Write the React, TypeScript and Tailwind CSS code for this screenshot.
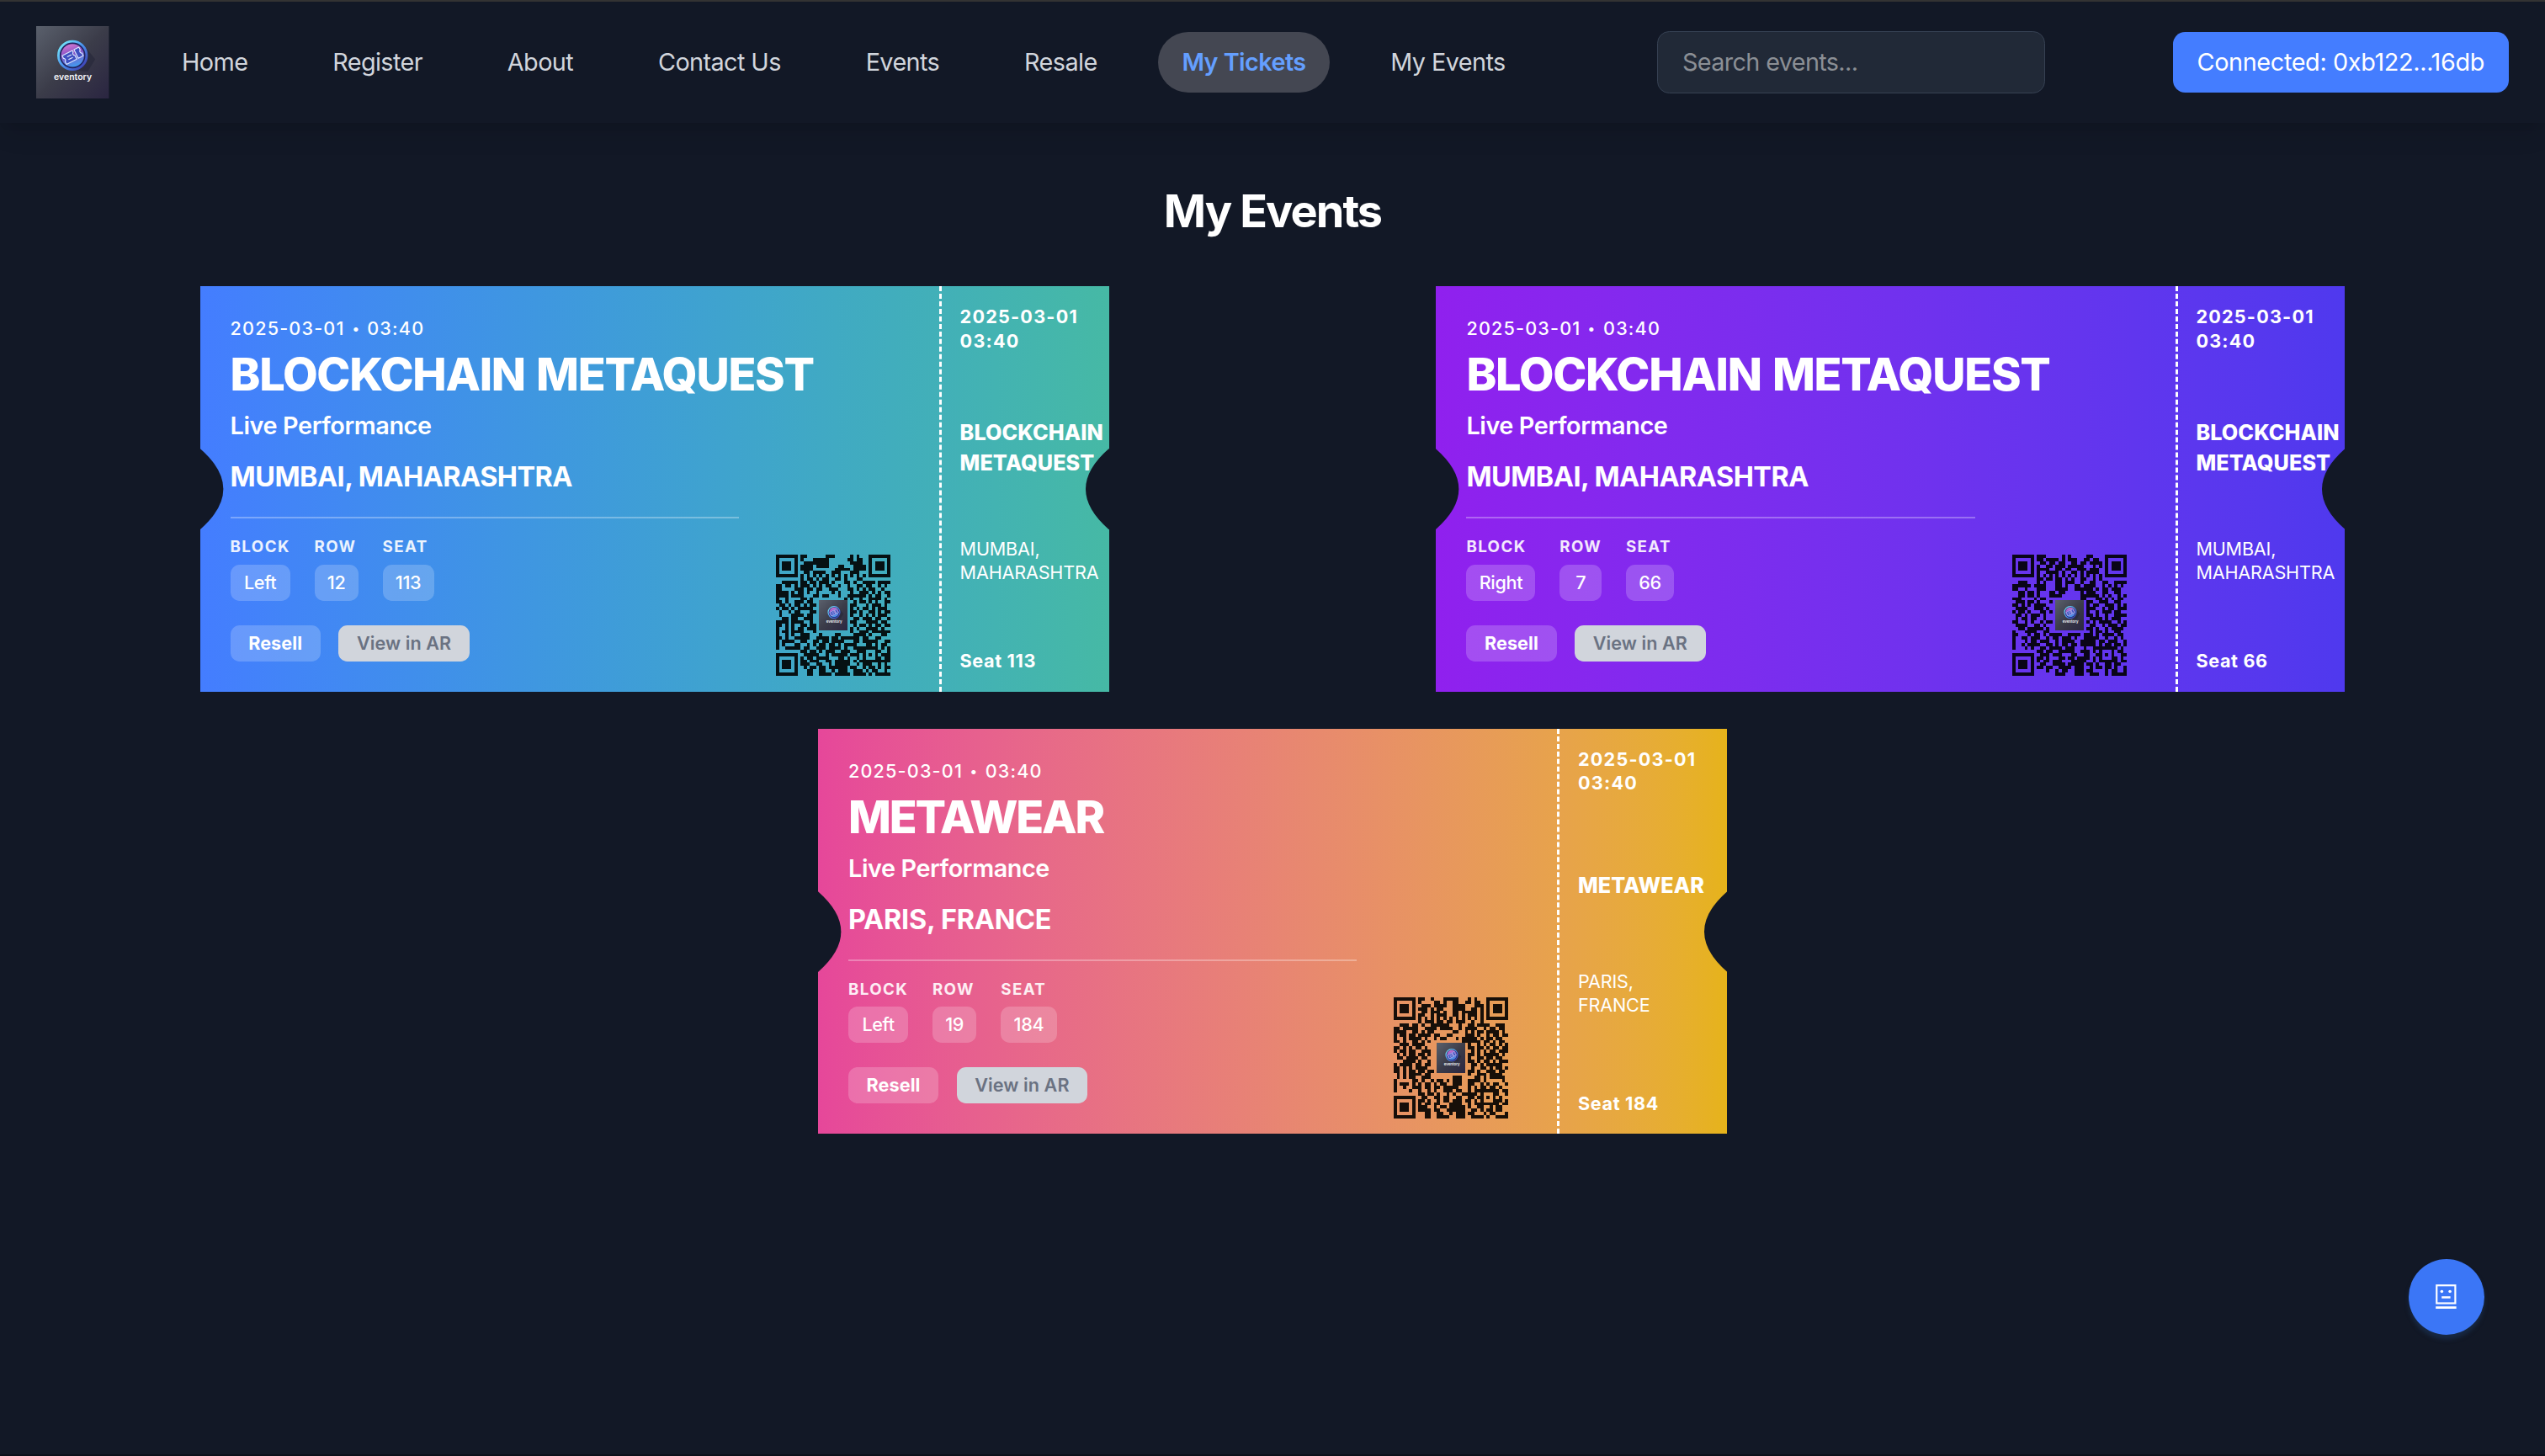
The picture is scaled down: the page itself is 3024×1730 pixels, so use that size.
import React from "react";

const QR_LEFT = [
  "#######.##......###.....#.#...#######",
  "#.....#.#...#####......##.##..#.....#",
  "#.###.#..########.......####..#.###.#",
  "#.###.#.####.####...##...####.#.###.#",
  "#.###.#.####.......#####.####.#.###.#",
  "#.....#..##.####..###...###...#.....#",
  "#######.#.#.#.#.#.#.#.#.#.#.#.#######",
  "........#.##.#.##..##.#...##.........",
  "..#####.##.##.###.#...##.#..####.####",
  "##.##.#.###.#.#.##..#..#..##.##..#.#.",
  "##....###.##.##..###...##.#.#.##..#..",
  "####.#.##.#..#....#.#...#..###.#.#.##",
  "####.####...##.##...#..######.#.##..#",
  "#..#....##.#..........#.#..#..####.#.",
  "##.#..###.##.............#.##.#.#..##",
  ".##.#.##.#.##...........##...#.###.#.",
  "#.##.#.#####............#.#.##.#.###.",
  ".#..#.##...##...........##.#..##.#.##",
  ".#...####.##............#..#.#.#.###.",
  "..##.##..###.............##.###.##..#",
  "####.####..#............##...####.##.",
  "##.#.#..##.##............#.##.#.##.##",
  "#..#.#.##.###...........#.#..####.#..",
  "#.##.####...#...........#..###.######",
  "#..#.#..###...#....##....####.#...##.",
  "##.#..#####..####.##.######.##..##...",
  "#.####..##..##.##.####...##.#####..##",
  "#.#...##..#.#.##.##.#.####...##.#.##.",
  "#..#####.##..###.####.#..########.#.#",
  "........##.##.#.###..###..###...##..#",
  "#######..#####..#.#####.###.#.#.#.###",
  "#.....#.#.##.####...##.#..#.#...##.##",
  "#.###.#.##.###..##.#####.#.##########",
  "#.###.#.###..##..#.#####..#.###..#.#.",
  "#.###.#..#.##.##.######.##..#.##.#.##",
  "#.....#...##..##..#.###..###.#.##..#.",
  "#######...##..####.#####.####.#.#####",
];

const QR_RIGHT = [
  "#######.###.....#.#.....##....#######",
  "#.....#.##.####.#.###..##.##..#.....#",
  "#.###.#..##.##.##..##.##.####.#.###.#",
  "#.###.#.#..##.###.#####...#.#.#.###.#",
  "#.###.#.####..##.##..###.###..#.###.#",
  "#.....#.#..####.#..##.#.####..#.....#",
  "#######.#.#.#.#.#.#.#.#.#.#.#.#######",
  "........##.##.##.#.#..##..#.#........",
  "..###...#.#...##.###..#..##..##..####",
  "######.####...##.#..##.####..#.#.#.#.",
  "##..#...###...####..######.#.##.###..",
  "..##.##.#...##.##.....#.###..##..##..",
  "..##.##.#...####......######.#.#..#.#",
  "###....#.##...........##...##.#.#.##.",
  ".###.##.#...#...........##..###..##..",
  "##.#.#.####.............#.##..###.#.#",
  ".####..###.#............###..#.##.###",
  "#.##.#...##.#...........#..#.###.##..",
  ".##.#.###.#.............##.#..#..####",
  ".#.##.##..#..............####.#.###..",
  "##..#.#..#.##...........#.#.####..#.#",
  ".####..##.#..............##..#.###.##",
  "..##.#####.#............##.#..#.####.",
  "#...####..##.............#.##.#..##..",
  "##...#.##.#.####..####.###.#.####.##.",
  "#..##.###..#.##.###.#..#####..#..#.#.",
  "#...#.##.###..#.####..#####.##.###..#",
  "#..#.####..##.#.##.##.#####.#.##.##.#",
  "#...#.#..##.####.###...#..########.#.",
  "........##.##..#####..###.#.#...#.##.",
  "#######..###.###...##..##..##.#.#..##",
  "#.....#.##.#...##.##.####.#.#...##.#.",
  "#.###.#.#.##.###...#####..#.######.##",
  "#.###.#..##..####.#####.##.#..##.##..",
  "#.###.#.##.##..####.###..#.##.##.#..#",
  "#.....#....#..#.##..###.##....#.##..#",
  "#######.......###...###..###..#.#####",
];

const QR_PINK = [
  "#######.##..#...#####...#.#...#######",
  "#.....#.#....##.#..##..##.##..#.....#",
  "#.###.#..###.####..####...###.#.###.#",
  "#.###.#.###.#.##...####..##.#.#.###.#",
  "#.###.#..##.###.#..##.#####.#.#.###.#",
  "#.....#.##..#.###..##.#.###.#.#.....#",
  "#######.#.#.#.#.#.#.#.#.#.#.#.#######",
  "........#.###.##.##.###..#..#........",
  "..###.##.#..######...#..##.####..###.",
  "##.#####..####.####..#.####..#.##.##.",
  "####..##.#.##......##..#.#.##.####.#.",
  "#.##.##.####.##..##....###.#..#.##.##",
  "#..#.####.#..#.##...#.#####.#.##.##..",
  "##.#..##.#.#..........######.##.#.##.",
  "..###.####..............#..#.#.##.#.#",
  "##.#.#.##.#.............##.##.#.##.##",
  "#.##.##..###.............#.#.#.##.###",
  ".#.#.##.##.#............##.#.#####.#.",
  ".##.####.##.............#..##.##.##..",
  "...####.#..#............##.#.##.#.###",
  "#.####.##.##.............##.#.#####..",
  "##.#.#.####..............#..##.#.##.#",
  "##.#.##.##.##...........##.#..###.##.",
  ".#.#.####.##............#..###.####..",
  ".#.#.##..###.......###....##.#.#####.",
  "#.....##.#..#.##.#.###..####.#.....#.",
  "#.###.#.#.##.#.##..###..##..#.#.##..#",
  "#..#..###.##.##.#####...#.#.##.##.#..",
  "#....#..#..#.#..###.##..#.########.##",
  "........##.##.#..#.#..#####.#...##..#",
  "#######..##..##.##..##..##.##.#.#.#..",
  "#.....#.##.#..#.##.###.##.#.#...###.#",
  "#.###.#.#.##.##...####..#.########.##",
  "#.###.#.###..#.##.#####.#..##..#.##..",
  "#.###.#.####.##..######..##.#.##.##..",
  "#.....#...##..##..#.###.##...#.##...#",
  "#######...##..####..###..####.#..####",
];

function Logo({ size, id }: { size: number; id: string }) {
  return (
    <svg width={size} height={size} viewBox="0 0 48 48" className="block shrink-0">
      <defs>
        <linearGradient id={`${id}-bg`} x1="0" y1="0" x2="1" y2="1">
          <stop offset="0" stopColor="#5a606c" />
          <stop offset=".5" stopColor="#3b3c49" />
          <stop offset="1" stopColor="#2a2541" />
        </linearGradient>
        <linearGradient id={`${id}-ring`} x1="0" y1="0" x2="1" y2="1">
          <stop offset="0" stopColor="#7df6fa" />
          <stop offset=".5" stopColor="#4a92ee" />
          <stop offset="1" stopColor="#3b2fa8" />
        </linearGradient>
        <linearGradient id={`${id}-disc`} x1="0.3" y1="0" x2=".6" y2="1">
          <stop offset="0" stopColor="#d77bd3" />
          <stop offset=".4" stopColor="#8a52c4" />
          <stop offset="1" stopColor="#3f9cf0" />
        </linearGradient>
      </defs>
      <rect width="48" height="48" fill={`url(#${id}-bg)`} />
      <path d="M31 12 L39 22 L34 30 L24 29 Z" fill="#252638" opacity=".6" />
      <circle cx="24" cy="19.4" r="9.3" fill="#20225e" />
      <circle cx="24" cy="19.4" r="9.3" fill="none" stroke={`url(#${id}-ring)`} strokeWidth="1.6" />
      <circle cx="24" cy="19.4" r="7.6" fill={`url(#${id}-disc)`} />
      <g transform="rotate(-27 24 19.4)" fill="#3f4fc0" stroke="#dce6ff" strokeWidth=".65" strokeLinejoin="round">
        <path d="M17.8 16.4h7.6v1.2a1.3 1.3 0 0 0 0 2.4v2.8h-7.6v-2a1.3 1.3 0 0 0 0-2.4z" />
        <path d="M26.6 16.4h3.6v2a1.3 1.3 0 0 0 0 2.4v2h-3.6z" />
        <path d="M20.4 18.6h3.2M20.4 20.6h3.2" fill="none" />
      </g>
      <text
        x="24.2"
        y="35.4"
        textAnchor="middle"
        fontFamily="Inter, sans-serif"
        fontWeight="600"
        fontSize="5.8"
        fill="#f3f5fa"
        textLength="25"
      >
        eventory
      </text>
    </svg>
  );
}

function QrCode({ rows, id }: { rows: string[]; id: string }) {
  const d = rows
    .map((row, y) =>
      Array.from(row.matchAll(/#+/g))
        .map((m) => `M${m.index} ${y}h${m[0].length}v1h-${m[0].length}z`)
        .join("")
    )
    .join("");
  return (
    <div className="relative h-20 w-[75.6px]">
      <svg viewBox="0 0 37 37" preserveAspectRatio="none" shapeRendering="crispEdges" className="block h-full w-full">
        <path d={d} fill="#000" fillOpacity=".9" />
      </svg>
      <div className="absolute left-[28.3px] top-[30px] h-5 w-[19px] overflow-hidden">
        <Logo size={20} id={id} />
      </div>
    </div>
  );
}

type Ticket = {
  id: string;
  name: string;
  nameTracking: string;
  city: string;
  cityTracking: string;
  cityTop: string;
  cityBottom: string;
  block: string;
  row: string;
  seat: string;
  gradient: string;
  qr: string[];
};

const tickets: Ticket[] = [
  {
    id: "t113",
    name: "BLOCKCHAIN METAQUEST",
    nameTracking: "tracking-[-0.024em] [word-spacing:0.05em]",
    city: "MUMBAI, MAHARASHTRA",
    cityTracking: "tracking-[-0.016em]",
    cityTop: "MUMBAI,",
    cityBottom: "MAHARASHTRA",
    block: "Left",
    row: "12",
    seat: "113",
    gradient: "from-[#447dff] to-[#46b9a5]",
    qr: QR_LEFT,
  },
  {
    id: "t66",
    name: "BLOCKCHAIN METAQUEST",
    nameTracking: "tracking-[-0.024em] [word-spacing:0.05em]",
    city: "MUMBAI, MAHARASHTRA",
    cityTracking: "tracking-[-0.016em]",
    cityTop: "MUMBAI,",
    cityBottom: "MAHARASHTRA",
    block: "Right",
    row: "7",
    seat: "66",
    gradient: "from-[#9020ee] to-[#4f39ee]",
    qr: QR_RIGHT,
  },
  {
    id: "t184",
    name: "METAWEAR",
    nameTracking: "tracking-[-0.04em]",
    city: "PARIS, FRANCE",
    cityTracking: "tracking-[-0.007em]",
    cityTop: "PARIS,",
    cityBottom: "FRANCE",
    block: "Left",
    row: "19",
    seat: "184",
    gradient: "from-[#e6479a] to-[#e6b31a]",
    qr: QR_PINK,
  },
];

function Detail({ label, value }: { label: string; value: string }) {
  return (
    <div className="flex flex-col">
      <span className="mb-[3px] text-[10.4px] leading-4 font-bold tracking-[0.075em] text-white/90">{label}</span>
      <span className="rounded-md bg-white/20 px-[8.5px] text-center text-xs leading-6 font-medium tracking-[-0.015em] text-white">
        {value}
      </span>
    </div>
  );
}

function Notch({ className }: { className: string }) {
  return (
    <svg
      viewBox="0 0 15.2 53.2"
      className={`absolute top-1/2 h-[53.2px] w-[15.2px] -translate-y-1/2 overflow-visible ${className}`}
    >
      <path d="M-3 0H0Q30.4 26.6 0 53.2H-3Z" fill="#121826" />
    </svg>
  );
}

function TicketCard({ t }: { t: Ticket }) {
  return (
    <article className={`relative flex h-[267.4px] w-[600px] overflow-hidden bg-linear-to-r text-white ${t.gradient}`}>
      <div className="flex flex-1 flex-col pt-5 pl-5">
        <p className="text-xs leading-4 font-medium tracking-[0.055em]">
          2025-03-01 <span className="inline-block scale-75">•</span> 03:40
        </p>
        <h2 className={`mt-[4.4px] text-[30px] leading-9 font-extrabold whitespace-nowrap ${t.nameTracking}`}>
          {t.name}
        </h2>
        <p className="mt-[3.6px] text-base leading-6 font-semibold tracking-[-0.014em]">Live Performance</p>
        <p className={`mt-2 text-lg leading-7 font-bold ${t.cityTracking}`}>{t.city}</p>
        <div className="mt-3 w-[335.8px] border-t-[1.2px] border-white/30" />
        <div className="mt-[11.4px] flex gap-4">
          <Detail label="BLOCK" value={t.block} />
          <Detail label="ROW" value={t.row} />
          <Detail label="SEAT" value={t.seat} />
        </div>
        <div className="mt-4 flex gap-3">
          <button className="rounded-md bg-white/20 px-3 text-xs leading-6 font-bold tracking-[0.004em]">Resell</button>
          <button className="rounded-md bg-[#d1d5dc] px-3 text-xs leading-6 font-semibold tracking-[0.004em] text-[#6a7282]">
            View in AR
          </button>
        </div>
      </div>
      <div className="absolute top-[177.2px] left-[380.2px]">
        <QrCode rows={t.qr} id={t.id} />
      </div>
      <div className="flex w-28 flex-col justify-between border-l-2 border-dashed border-white p-3">
        <p className="text-xs leading-4 font-bold tracking-[0.057em]">
          2025-03-01
          <br />
          03:40
        </p>
        <p className="mt-[3.6px] text-sm leading-5 font-extrabold tracking-[0.003em]">
          {t.name.split(" ").map((w) => (
            <span key={w} className="block">
              {w}
            </span>
          ))}
        </p>
        <p className="mb-[4px] text-xs leading-[15.6px] tracking-[-0.008em]">
          {t.cityTop}
          <br />
          {t.cityBottom}
        </p>
        <p className="text-xs leading-4 font-bold tracking-[0.03em]">Seat {t.seat}</p>
      </div>
      <Notch className="left-0" />
      <Notch className="right-0 -scale-x-100" />
    </article>
  );
}

const links = ["Home", "Register", "About", "Contact Us", "Events", "Resale", "My Tickets", "My Events"];

export default function App() {
  return (
    <div className="flex h-[961.11px] w-[1680px] flex-col overflow-hidden border-y-[1.2px] border-t-[#333333] border-b-[#0b0f1a] bg-[#121826] font-['Inter',sans-serif] text-white [zoom:1.8]">
      <nav className="flex h-20 shrink-0 items-center justify-between px-6 shadow-lg">
        <div className="flex items-center gap-8">
          <Logo size={48} id="nav" />
          <div className="flex gap-6">
            {links.map((l) => (
              <a
                key={l}
                className={
                  l === "My Tickets"
                    ? "rounded-full bg-[#444752] px-4 py-2 font-semibold tracking-[-0.02em] text-[#649fff]"
                    : "px-4 py-2 tracking-[-0.02em] text-[#d1d5dc]"
                }
              >
                {l}
              </a>
            ))}
          </div>
        </div>
        <input
          placeholder="Search events..."
          className="w-64 rounded-lg border border-[#364153] bg-[#212937] px-4 py-2 tracking-[-0.022em] placeholder:text-[#8b8f95]"
        />
        <button className="rounded-lg bg-[#447dff] px-4 py-2 tracking-[-0.0125em]">Connected: 0xb122...16db</button>
      </nav>
      <main className="flex flex-col px-9 pt-10">
        <h1 className="pt-[0.8px] text-center text-3xl leading-[35.2px] font-bold tracking-[-0.036em]">My Events</h1>
        <div className="mt-8 flex flex-wrap justify-around gap-x-6 gap-y-[24.6px]">
          {tickets.map((t) => (
            <TicketCard key={t.id} t={t} />
          ))}
        </div>
      </main>
      <button className="absolute right-10 bottom-20 flex size-[50px] items-center justify-center rounded-full bg-[#3b76f6] shadow-[0_3px_3px_rgba(30,58,95,0.5)]">
        <svg width="14" height="17" viewBox="0 0 14 17" fill="none" stroke="#fff">
          <rect x=".7" y=".7" width="12.3" height="11.8" strokeWidth="1.2" />
          <circle cx="4.1" cy="4.7" r="1" fill="#fff" stroke="none" />
          <circle cx="9.5" cy="4.7" r="1" fill="#fff" stroke="none" />
          <path d="M4 8.6h5.8M.1 15.4h13.6" strokeWidth="1.5" />
        </svg>
      </button>
    </div>
  );
}
